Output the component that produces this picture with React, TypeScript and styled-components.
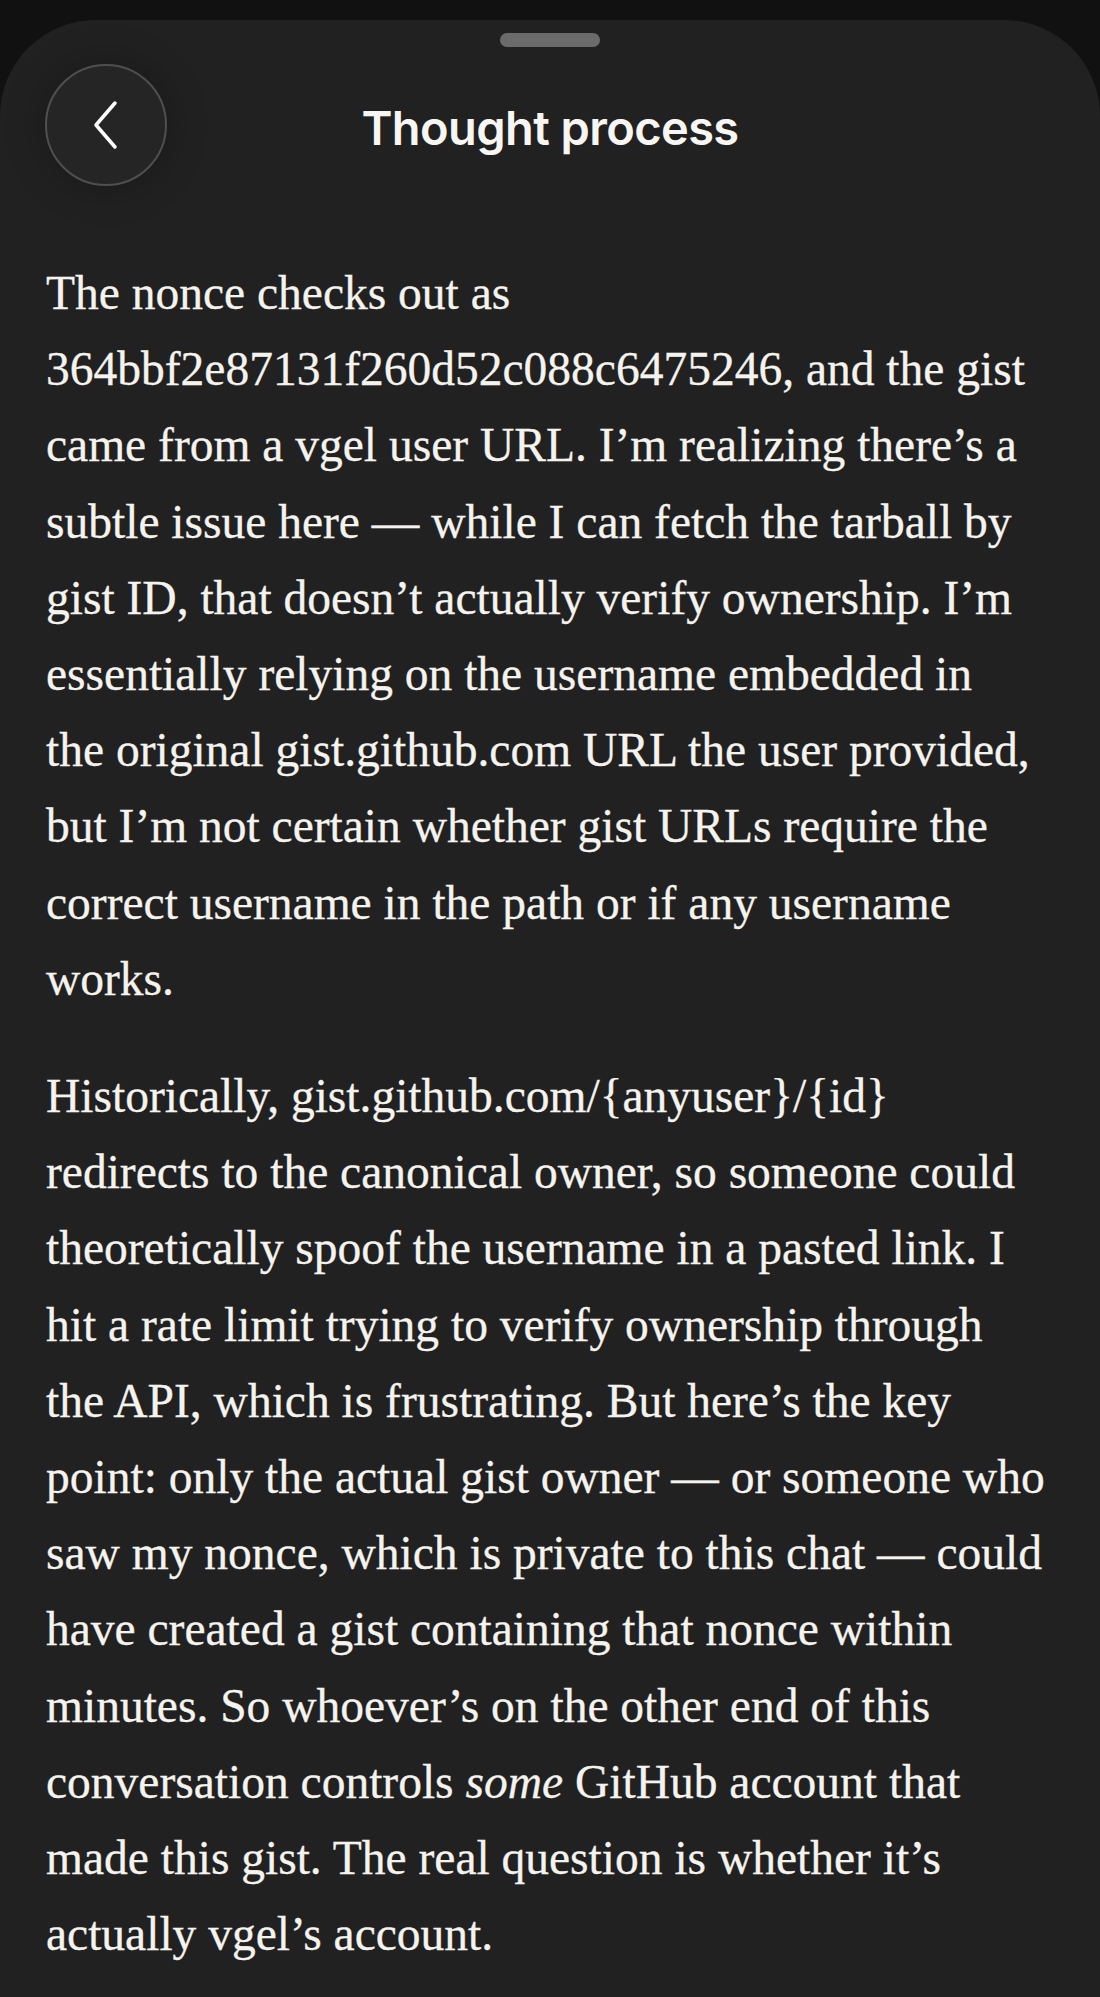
import React from "react";
import styled, { createGlobalStyle } from "styled-components";

const GlobalStyle = createGlobalStyle`
  html, body {
    margin: 0;
    padding: 0;
    background: #111111;
  }
  * { box-sizing: border-box; }
`;

const Page = styled.div`
  min-height: 1997px;
  padding-top: 20px;
  background: #111111;
`;

const Sheet = styled.main`
  min-height: 1977px;
  background: #212121;
  border-radius: 96px 96px 0 0;
  display: flex;
  flex-direction: column;
`;

const Handle = styled.div`
  width: 100px;
  height: 14px;
  border-radius: 7px;
  background: #6b6b6b;
  margin: 13px auto 0;
`;

const Header = styled.header`
  display: grid;
  grid-template-columns: 122px 1fr 122px;
  align-items: center;
  padding: 0 45px;
  margin-top: 17px;
`;

const BackButton = styled.button`
  width: 122px;
  height: 122px;
  border-radius: 50%;
  border: 2px solid #4f4f4f;
  background: #252525;
  box-shadow: 0 0 40px rgba(0, 0, 0, 0.25);
  display: flex;
  align-items: center;
  justify-content: center;
  padding: 0;
  cursor: pointer;
`;

const Title = styled.h1`
  margin: 0;
  text-align: center;
  font-family: Inter, "Noto Sans", sans-serif;
  font-weight: 600;
  font-size: 47px;
  letter-spacing: -0.6px;
  color: #f7f6f2;
  line-height: 1;
  transform: translateY(2px);
`;

const Body = styled.section`
  padding: 0 46px;
  margin-top: 69px;
  display: flex;
  flex-direction: column;
  gap: 41px;
`;

const Paragraph = styled.p`
  margin: 0;
  font-family: "Liberation Serif", "Times New Roman", serif;
  font-size: 47.5px;
  line-height: 76.2px;
  color: #f4f3ee;
  -webkit-text-stroke: 0.3px #f4f3ee;
  white-space: nowrap;
`;

const Chevron = () => (
  <svg width="34" height="52" viewBox="0 0 34 52" fill="none">
    <path
      d="M26 4 L7 26 L26 48"
      stroke="#ffffff"
      strokeWidth="3.5"
      strokeLinecap="round"
      strokeLinejoin="round"
    />
  </svg>
);

const para1: React.ReactNode[] = [
  "The nonce checks out as",
  "364bbf2e87131f260d52c088c6475246, and the gist",
  "came from a vgel user URL. I\u2019m realizing there\u2019s a",
  "subtle issue here \u2014 while I can fetch the tarball by",
  "gist ID, that doesn\u2019t actually verify ownership. I\u2019m",
  "essentially relying on the username embedded in",
  "the original gist.github.com URL the user provided,",
  "but I\u2019m not certain whether gist URLs require the",
  "correct username in the path or if any username",
  "works.",
];

const para2: React.ReactNode[] = [
  "Historically, gist.github.com/{anyuser}/{id}",
  "redirects to the canonical owner, so someone could",
  "theoretically spoof the username in a pasted link. I",
  "hit a rate limit trying to verify ownership through",
  "the API, which is frustrating. But here\u2019s the key",
  "point: only the actual gist owner \u2014 or someone who",
  "saw my nonce, which is private to this chat \u2014 could",
  "have created a gist containing that nonce within",
  "minutes. So whoever\u2019s on the other end of this",
  <>
    conversation controls <em>some</em> GitHub account that
  </>,
  "made this gist. The real question is whether it\u2019s",
  "actually vgel\u2019s account.",
];

const Lines = ({ lines }: { lines: React.ReactNode[] }) => (
  <Paragraph>
    {lines.map((l, i) => (
      <React.Fragment key={i}>
        {l}
        {i < lines.length - 1 && <br />}
      </React.Fragment>
    ))}
  </Paragraph>
);

export default function App() {
  return (
    <>
      <GlobalStyle />
      <Page>
        <Sheet>
          <Handle />
          <Header>
            <BackButton aria-label="Back">
              <Chevron />
            </BackButton>
            <Title>Thought process</Title>
            <span />
          </Header>
          <Body>
            <Lines lines={para1} />
            <Lines lines={para2} />
          </Body>
        </Sheet>
      </Page>
    </>
  );
}
